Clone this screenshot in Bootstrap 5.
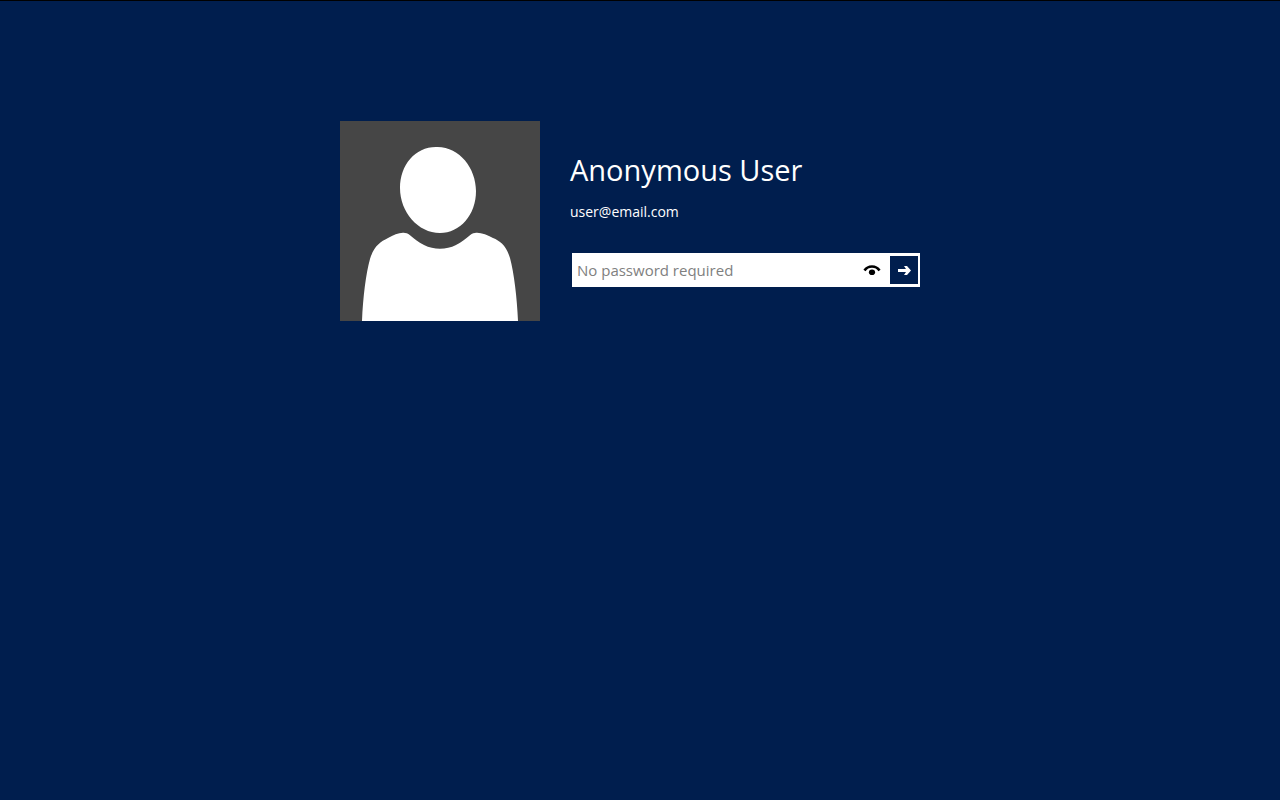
<!DOCTYPE html>
<html lang="en">
<head>
<meta charset="utf-8">
<meta name="viewport" content="width=device-width, initial-scale=1">
<title>Sign in</title>
<link href="https://cdn.jsdelivr.net/npm/bootstrap@5.3.0/dist/css/bootstrap.min.css" rel="stylesheet">
<style>
  :root { --navy: #001e4e; }
  body {
    background: var(--navy);
    border-top: 1px solid #000;
    font-family: "Open Sans", "Noto Sans", sans-serif;
  }
  .login { max-width: 600px; padding-top: 120px; gap: 30px; }
  .avatar { width: 200px; height: 200px; background: #464646; }
  .details { padding-top: 30px; }
  .user-name { font-size: 29px; line-height: 38px; font-weight: 400; }
  .user-mail { font-size: 14px; line-height: 20px; margin: 13px 0 31px; }
  .pass-box { max-width: 348px; height: 34px; margin-left: 2px; padding: 3px 2px 3px 5px; }
  .pass-box .form-control { font-size: 15px; line-height: 28px; color: #222; }
  .pass-box .form-control::placeholder { color: #808080; opacity: 1; }
  .pass-box button { height: 28px; }
  .reveal { width: 36px; }
  .submit { width: 28px; background: var(--navy); }
</style>
</head>
<body class="min-vh-100">
<main class="login container-fluid d-flex flex-wrap px-0 mx-auto text-white">
  <svg class="avatar flex-shrink-0" viewBox="0 0 200 200" fill="#fff" role="img" aria-label="User picture">
    <path d="M96 26C119 25 136 47 136 70C136 94 120 112 100 112C78 112 60 91 60 67C60 44 75 26 96 26Z"/>
    <path d="M22 200C23 176 26 152 30 138C34 125 40 121 48 117C54 114 60 111 65 112C70 112 72 118 84 124C94 129 106 129 116 124C128 118 130 112 135 112C140 111 147 114 153 117C160 120 166 124 170 137C174 152 177 176 178 200Z"/>
  </svg>
  <div class="details flex-fill">
    <h1 class="user-name mb-0">Anonymous User</h1>
    <p class="user-mail">user@email.com</p>
    <form class="pass-box bg-white d-flex align-items-center">
      <input type="password" class="form-control border-0 rounded-0 shadow-none bg-transparent p-0" placeholder="No password required" aria-label="Password">
      <button type="button" class="reveal btn rounded-0 border-0 p-0 d-flex align-items-center justify-content-center flex-shrink-0" aria-label="Show password">
        <svg width="18" height="12" viewBox="0 0 18 12" aria-hidden="true">
          <path d="M1.500 6.500C5 1.200 13 1.200 16.500 6.500" fill="none" stroke="#000" stroke-width="2.600"/>
          <ellipse cx="9" cy="8.300" rx="3.100" ry="2.800"/>
        </svg>
      </button>
      <button type="submit" class="submit btn rounded-0 border-0 p-0 d-flex align-items-center justify-content-center flex-shrink-0" aria-label="Sign in">
        <svg width="14" height="12" viewBox="0 0 14 12" fill="#fff" aria-hidden="true">
          <path d="M1 5H9L7 2H10L14 6.500L10 11H7L9 8H1Z"/>
        </svg>
      </button>
    </form>
  </div>
</main>
<script src="https://cdn.jsdelivr.net/npm/bootstrap@5.3.0/dist/js/bootstrap.bundle.min.js"></script>
</body>
</html>
